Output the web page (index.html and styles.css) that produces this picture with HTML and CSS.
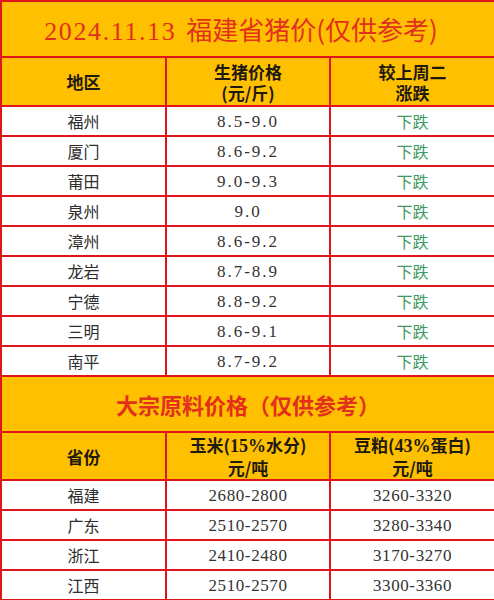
FILE: index.html
```html
<!DOCTYPE html>
<html lang="zh">
<head>
<meta charset="utf-8">
<link rel="stylesheet" href="styles.css">
</head>
<body>
<table class="sheet">
  <colgroup><col class="c1"><col class="c2"><col class="c3"></colgroup>
  <tr class="title-row"><td colspan="3" class="title"><span class="tnum">2024.11.13</span> 福建省猪价(仅供参考)</td></tr>
  <tr class="head-row">
    <td class="head">地区</td>
    <td class="head">生猪价格<br>(元/斤)</td>
    <td class="head">较上周二<br>涨跌</td>
  </tr>
  <tr class="row"><td>福州</td><td><span class="num">8.5-9.0</span></td><td class="down">下跌</td></tr>
  <tr class="row"><td>厦门</td><td><span class="num">8.6-9.2</span></td><td class="down">下跌</td></tr>
  <tr class="row"><td>莆田</td><td><span class="num">9.0-9.3</span></td><td class="down">下跌</td></tr>
  <tr class="row"><td>泉州</td><td><span class="num">9.0</span></td><td class="down">下跌</td></tr>
  <tr class="row"><td>漳州</td><td><span class="num">8.6-9.2</span></td><td class="down">下跌</td></tr>
  <tr class="row"><td>龙岩</td><td><span class="num">8.7-8.9</span></td><td class="down">下跌</td></tr>
  <tr class="row"><td>宁德</td><td><span class="num">8.8-9.2</span></td><td class="down">下跌</td></tr>
  <tr class="row"><td>三明</td><td><span class="num">8.6-9.1</span></td><td class="down">下跌</td></tr>
  <tr class="row"><td>南平</td><td><span class="num">8.7-9.2</span></td><td class="down">下跌</td></tr>
  <tr class="title-row2"><td colspan="3" class="title2">大宗原料价格（仅供参考）</td></tr>
  <tr class="head-row2">
    <td class="head">省份</td>
    <td class="head">玉米(<span class="hnum">15%</span>水分)<br>元/吨</td>
    <td class="head">豆粕(<span class="hnum">43%</span>蛋白)<br>元/吨</td>
  </tr>
  <tr class="row"><td>福建</td><td><span class="num2">2680-2800</span></td><td><span class="num2">3260-3320</span></td></tr>
  <tr class="row"><td>广东</td><td><span class="num2">2510-2570</span></td><td><span class="num2">3280-3340</span></td></tr>
  <tr class="row"><td>浙江</td><td><span class="num2">2410-2480</span></td><td><span class="num2">3170-3270</span></td></tr>
  <tr class="row"><td>江西</td><td><span class="num2">2510-2570</span></td><td><span class="num2">3300-3360</span></td></tr>
</table>
</body>
</html>
```
FILE: styles.css
```css
html, body {
  margin: 0;
  padding: 0;
  background: #ffffff;
}
.sheet {
  width: 494px;
  border-collapse: collapse;
  table-layout: fixed;
  font-family: "Noto Sans CJK SC", sans-serif;
  color: #2e2e2e;
}
.c1 { width: 165px; }
.c2 { width: 164px; }
.c3 { width: 165px; }
.sheet td {
  border: 2px solid #e3151c;
  padding: 0;
  text-align: center;
  vertical-align: middle;
  font-size: 16px;
  line-height: 20px;
}
.title-row td { height: 52px; }
.sheet .title {
  background: #ffc000;
  color: #e3301c;
  font-size: 26px;
  line-height: 30px;
  padding: 2px 14px 0 0;
}
.tnum {
  font-family: "Liberation Serif", serif;
  letter-spacing: 1.6px;
  margin-right: 4px;
}
.head-row td { height: 47px; }
.head-row2 td { height: 46px; }
.sheet .head {
  background: #ffc000;
  color: #1f1a10;
  font-weight: bold;
  font-size: 17px;
  line-height: 21px;
}
.hnum {
  font-family: "Liberation Serif", serif;
  font-weight: bold;
  font-size: 18px;
}
.row td { height: 28px; background: #ffffff; }
.num {
  font-family: "Liberation Serif", serif;
  font-size: 17px;
  letter-spacing: 2px;
  color: #333333;
}
.num2 {
  font-family: "Liberation Serif", serif;
  font-size: 17px;
  letter-spacing: 0.6px;
  color: #333333;
}
.down { color: #3c9a5c; }
.title-row2 td { height: 54px; }
.sheet .title2 {
  background: #ffc000;
  color: #e3301c;
  font-weight: bold;
  font-size: 22px;
  line-height: 28px;
}
```
